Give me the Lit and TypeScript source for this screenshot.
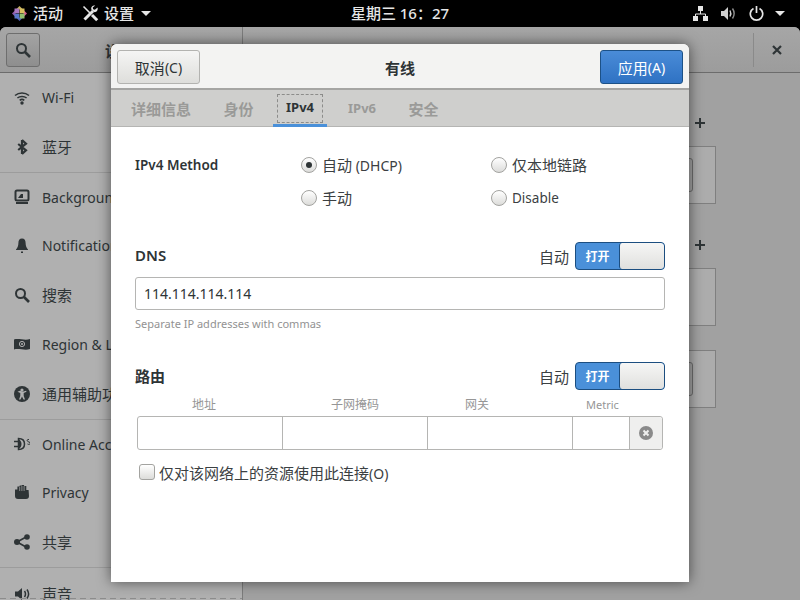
import { LitElement, html, css, svg } from "lit";
import { customElement } from "lit/decorators.js";

const ic = (body: unknown, w = 16, h = 16, vb = "0 0 16 16") =>
  html`<svg width=${w} height=${h} viewBox=${vb}>${body}</svg>`;

const icons: Record<string, unknown> = {
  wifi: ic(svg`<g fill="none" stroke="#2e3436" stroke-width="1.6"><path d="M1 6.5c4-3.4 10-3.4 14 0"/><path d="M3.4 9c2.6-2.1 6.6-2.1 9.2 0"/><path d="M5.7 11.3c1.3-1 3.3-1 4.6 0"/></g><circle cx="8" cy="14" r="1.7" fill="#2e3436"/>`),
  bt: ic(svg`<path d="M8 1v14M8 1l4 3.7L4.2 11M8 15l4-3.7L4.2 5" fill="none" stroke="#2e3436" stroke-width="2.2"/>`),
  bg: ic(svg`<rect x="1.5" y="1.5" width="13" height="10" rx="1.5" fill="none" stroke="#2e3436" stroke-width="2"/><path d="M4 9l3-4h2v4z" fill="#2e3436"/><rect x="2" y="13" width="12" height="2" fill="#2e3436"/>`),
  bell: ic(svg`<path d="M8 1.5c-2.6 0-3.6 2-3.6 4.5 0 3-1 5-2.4 6.5v.5h12v-.5c-1.4-1.5-2.4-3.5-2.4-6.5C11.600 3.500 10.600 1.500 8 1.500z" fill="#2e3436"/><rect x="7" y="14.500" width="2" height="1.500" fill="#2e3436"/>`),
  search: ic(svg`<circle cx="6.500" cy="6.500" r="4.500" fill="none" stroke="#2e3436" stroke-width="2"/><path d="M10 10l5 5" stroke="#2e3436" stroke-width="2.600"/>`),
  region: ic(svg`<path d="M0 3.500c5-1.500 11 1.500 16-.5v10c-5 2-11-1-16 .5z" fill="#2e3436"/><circle cx="8" cy="8" r="2.600" fill="none" stroke="#b0b0b0"/><circle cx="8" cy="8" r="1" fill="#b0b0b0"/>`),
  a11y: ic(svg`<circle cx="8" cy="8" r="8" fill="#2e3436"/><circle cx="8" cy="4" r="1.600" fill="#b0b0b0"/><path d="M3.500 5.800L6.300 7v3L5 13.500h1.500L8 10.500l1.500 3H11L9.700 10V7l2.800-1.200-.4-1c-2.800 1-3.400 1-6.200 0z" fill="#b0b0b0"/>`),
  online: ic(svg`<path d="M0 5.500h4M0 10.500h4" stroke="#2e3436" stroke-width="1.400"/><path d="M4.500 2.500c4.500 0 6 3 6 5.500s-1.500 5.500-6 5.500z" fill="none" stroke="#2e3436" stroke-width="1.500"/><path d="M4.500 3v10c2-1 3-3 3-5s-1-4-3-5z" fill="#2e3436"/><path d="M15 3.500c-2.500-.5-2.500 2 0 2.500s1 3.500-1.500 2" fill="none" stroke="#2e3436"/>`),
  hand: ic(svg`<path d="M1 5.500h2.400v-3H5.700V1.500h2.200v-.5h2.200v1h2.200v4h2.300l.4 6c0 1.700-1 3-3 3H4c-2 0-3-1.300-3-3z" fill="#2e3436"/><path d="M5.700 3v4M7.900 2v5M10.100 2v5" stroke="#b0b0b0" stroke-width=".7"/>`),
  share: ic(svg`<path d="M3 8l10-5.500M3 8l10 5.500" stroke="#2e3436" stroke-width="1.700"/><circle cx="3" cy="8" r="3" fill="#2e3436"/><circle cx="13" cy="3" r="2.800" fill="#2e3436"/><circle cx="13" cy="13" r="2.800" fill="#2e3436"/>`),
  sound: ic(svg`<path d="M1 5.500h3L8 2v12L4 10.500H1z" fill="#2e3436"/><path d="M10.500 5c1.200 1.800 1.200 4.200 0 6M13 3.500c2 2.800 2 6.200 0 9" fill="none" stroke="#2e3436" stroke-width="1.500"/>`),
};

const rows: [string, unknown, boolean, boolean][] = [
  ["wifi", "Wi-Fi", false, false],
  ["bt", html`<b class="c">蓝牙</b>`, true, true],
  ["bg", "Background", false, false],
  ["bell", "Notifications", false, false],
  ["search", html`<b class="c">搜索</b>`, true, false],
  ["region", "Region & Language", false, false],
  ["a11y", html`<b class="c">通用辅助功能</b>`, true, true],
  ["online", "Online Accounts", false, false],
  ["hand", "Privacy", false, false],
  ["share", html`<b class="c">共享</b>`, true, true],
  ["sound", html`<b class="c">声音</b>`, true, false],
];

@customElement("app-root")
export class AppRoot extends LitElement {
  static styles = css`
    :host { display: block; width: 800px; height: 600px; overflow: hidden; position: relative; background: #000; font-family: "Noto Sans", "Noto Sans CJK SC", sans-serif; font-size: 14px; color: #2e3436; }
    * { box-sizing: border-box; }
    .c { font-size: 15px; font-weight: inherit; }
    .topbar { height: 27px; display: grid; grid-template-columns: 1fr auto 1fr; align-items: center; color: #e6e6e6; font-weight: 500; line-height: 27px; }
    .tb-l { display: flex; align-items: center; padding-left: 12px; }
    .tb-r { display: flex; align-items: center; justify-content: flex-end; padding-right: 15px; }
    .logo { margin-right: 6px; display: flex; }
    .tools { margin-left: 19px; margin-right: 5px; display: flex; }
    .arrow { width: 0; height: 0; border-left: 5px solid transparent; border-right: 5px solid transparent; border-top: 5px solid #e6e6e6; margin-left: 7px; }
    .tb-r svg { display: block; }
    .tb-r .m { margin-left: 13px; }
    .tb-r .arrow { margin-left: 11px; }
    .clock { font-size: 15px; }
    .win { height: 573px; background: #a1a1a1; border-radius: 6px 6px 0 0; overflow: hidden; display: grid; grid-template-columns: 243px 1fr; grid-template-rows: 46px 1fr; }
    .hd-l { background: linear-gradient(#a6a6a6, #9c9c9c); border-bottom: 1px solid #6c6c6c; border-right: 1px solid #7c7c7c; padding: 6px; display: grid; grid-template-columns: 34px 1fr; align-items: center; }
    .searchbtn { width: 34px; height: 34px; border: 1px solid #6e6e6e; border-radius: 3px; background: linear-gradient(#a3a3a3, #8e8e8e); display: flex; align-items: center; justify-content: center; }
    .hd-title { font-weight: 700; font-size: 15px; padding-left: 65px; }
    .hd-r { background: linear-gradient(#a6a6a6, #9c9c9c); border-bottom: 1px solid #6c6c6c; display: flex; justify-content: flex-end; align-items: center; padding: 6px 0; }
    .hd-sep { width: 1px; height: 34px; background: #8a8a8a; }
    .close { width: 46px; display: flex; justify-content: center; }
    .side { background: #b0b0b0; border-right: 1px solid #7c7c7c; overflow: hidden; position: relative; }
    .side::after { content: ""; position: absolute; left: 0; right: 0; bottom: 1px; height: 1px; background: repeating-linear-gradient(90deg, #8c8c8c 0 6px, transparent 6px 10px); }
    .row { height: 48px; display: flex; align-items: center; padding-left: 14px; gap: 12px; white-space: nowrap; color: #2e3436; }
    .row.tall { height: 51px; }
    .row svg { flex: none; display: block; }
    .sep { height: 1px; background: #9c9c9c; }
    .main { padding: 44px 84px 0 30px; display: flex; flex-direction: column; }
    .plus-row { display: flex; justify-content: flex-end; height: 16px; margin-right: 10px; }
    .plus-row svg { display: block; }
    .frame { height: 58px; border: 1px solid #7f7f7f; background: #acacac; display: flex; justify-content: flex-end; align-items: center; padding-right: 22px; margin-top: 13px; }
    .frame .b { width: 40px; height: 34px; border: 1px solid #6e6e6e; border-radius: 3px; background: #a4a4a4; }
    .mt2 { margin-top: 24px; }
    .plus2 { margin-top: 35px; }
    .dialog { position: absolute; left: 111px; top: 44px; width: 578px; height: 538px; background: #fff; border-radius: 6px 6px 0 0; box-shadow: 0 0 14px rgba(0,0,0,.55); display: flex; flex-direction: column; }
    .d-head { height: 46px; background: #f3f3f2; border-bottom: 2px solid #a5a5a3; border-radius: 6px 6px 0 0; display: grid; grid-template-columns: 1fr auto 1fr; align-items: center; padding: 6px; }
    .btn { height: 34px; width: 83px; border-radius: 3px; border: 1px solid #b3b3b0; background: linear-gradient(#f5f5f4, #dededb); display: flex; align-items: center; justify-content: center; color: #2e3436; }
    .btn.apply { background: linear-gradient(#4a8cd8, #2f72c3); border-color: #1c5187; color: #fff; justify-self: end; }
    .d-title { font-weight: 700; font-size: 15px; color: #2e3436; }
    .tabs { height: 37px; background: #cfcfcd; border-bottom: 1px solid #b5b5b3; display: flex; padding-left: 7px; gap: 6.5px; font-weight: 700; color: #9a9a98; font-size: 15px; }
    .tab { padding: 0 13px; height: 36px; display: flex; align-items: center; position: relative; }
    .tab.on { color: #2e3436; border-bottom: 3px solid #4a90d9; margin-bottom: -1px; margin-right: 1.5px; height: 37px; }
    .lat { font-size: 13px; }
    .focus { position: absolute; left: 4px; right: 4px; top: 4px; bottom: 1px; border: 1px dashed #8c8c8a; }
    .tab span { position: relative; }
    .body { padding: 21px 24px 0; display: flex; flex-direction: column; }
    .method { display: grid; grid-template-columns: 166px 190px 1fr; grid-auto-rows: 33px; align-items: center; }
    .lbl { font-weight: 600; font-size: 13.5px; color: #2e3436; }
    .opt { display: flex; align-items: center; gap: 5px; color: #3b4042; white-space: nowrap; }
    .opt.narrow { font-size: 13.5px; }
    .radio { width: 16px; height: 16px; border-radius: 50%; border: 1px solid #a3a3a0; background: linear-gradient(#fff, #dcdcda); display: flex; align-items: center; justify-content: center; flex: none; }
    .radio.on::after { content: ""; width: 6px; height: 6px; border-radius: 50%; background: #2e3436; }
    .sw-row { height: 28px; display: flex; align-items: center; justify-content: space-between; }
    .sw-row .t { font-size: 15px; font-weight: 600; padding-bottom: 2px; }
    .sw-r { display: flex; align-items: center; gap: 6px; color: #3b4042; font-size: 15px; }
    .switch { width: 90px; height: 28px; border: 1px solid #1c4e80; border-radius: 4px; background: #4a90d9; display: flex; overflow: hidden; }
    .switch .on { width: 43px; display: flex; align-items: center; justify-content: center; color: #fff; font-weight: 700; font-size: 12px; }
    .switch .knob { flex: 1; border-left: 1px solid #1c4e80; border-radius: 3px; background: linear-gradient(#f6f6f5, #e0e0de); }
    .dns { margin-top: 28px; }
    .entry { margin-top: 7px; height: 33px; border: 1px solid #b5b5b3; border-radius: 3px; padding: 0 8px 1px; display: flex; align-items: center; color: #2e3436; }
    .hint { margin-top: 6px; height: 16px; line-height: 16px; font-size: 11px; color: #929292; }
    .route { margin-top: 30px; }
    .cols { margin-top: 8px; height: 14px; line-height: 14px; display: grid; grid-template-columns: 139px 134px 121px auto; padding-left: 57px; font-size: 12px; color: #969696; }
    .cols .m { font-size: 11px; }
    .table { margin: 4px 2px 0; height: 34px; border: 1px solid #b5b5b3; border-radius: 3px; display: grid; grid-template-columns: 145px 145px 145px 57px 1fr; }
    .table div { border-right: 1px solid #b5b5b3; }
    .table .x { border: 0; background: #efefee; display: flex; align-items: center; justify-content: center; border-radius: 0 3px 3px 0; }
    .chk { margin: 13px 0 0 4px; display: flex; align-items: center; gap: 4px; height: 18px; color: #3b4042; font-size: 15px; }
    .chk .o { font-size: 14px; }
    .box { width: 16px; height: 16px; border: 1px solid #a3a3a0; border-radius: 3px; background: linear-gradient(#fff, #dcdcda); flex: none; }
  `;

  render() {
    return html`
      <div class="topbar">
        <div class="tb-l">
          <span class="logo"><svg width="15" height="15" viewBox="0 0 15 15">
            <path d="M7.500 0L11 3.500H4z" fill="#c4b060"/><path d="M15 7.500L11.500 11V4z" fill="#d05a90"/><path d="M7.500 15L4 11.500h7z" fill="#5060b8"/><path d="M0 7.500L3.500 4v7z" fill="#8a5aa8"/>
            <rect x="2.500" y="2.500" width="4.800" height="4.800" fill="#a878c0"/><rect x="7.700" y="2.500" width="4.800" height="4.800" fill="#d8c060"/><rect x="2.500" y="7.700" width="4.800" height="4.800" fill="#5878c8"/><rect x="7.700" y="7.700" width="4.800" height="4.800" fill="#90c070"/>
          </svg></span>
          <span class="c">活动</span>
          <span class="tools"><svg width="17" height="17" viewBox="0 0 17 17"><path d="M1.500 1.500l6.500 6.500" stroke="#e6e6e6" stroke-width="1.600"/><path d="M10 10l5.200 5.200" stroke="#e6e6e6" stroke-width="3"/><path d="M2.500 14.500l8.500-8.500" stroke="#e6e6e6" stroke-width="3"/><path d="M15.500 2.500l-2.600 2.300-1.700-.6-.5-1.700L13.200.6c-2.700-.8-4.800 1.700-3.700 4.200l2.400 2.300c2.500.8 4.500-1.800 3.600-4.600z" fill="#e6e6e6"/></svg></span>
          <span class="c">设置</span>
          <span class="arrow"></span>
        </div>
        <div class="clock">星期三 16：27</div>
        <div class="tb-r">
          <svg width="15" height="15" viewBox="0 0 15 15"><rect x="5" y="0" width="5" height="5" fill="#e6e6e6"/><rect x="0" y="10" width="5" height="5" fill="#e6e6e6"/><rect x="10" y="10" width="5" height="5" fill="#e6e6e6"/><path d="M7.500 5v3M2.500 10V8h10v2" fill="none" stroke="#e6e6e6"/></svg>
          <svg class="m" width="15" height="15" viewBox="0 0 15 15"><path d="M0 5h3l4-4v13l-4-4H0z" fill="#d0d0d0"/><path d="M9 4.500c1 1.800 1 4.200 0 6" fill="none" stroke="#d0d0d0" stroke-width="1.400"/><path d="M11.500 2.500c2 3 2 7 0 10" fill="none" stroke="#8f8f8f" stroke-width="1.400"/></svg>
          <svg class="m" width="15" height="15" viewBox="0 0 15 15"><path d="M4.500 2.500a6.200 6.200 0 1 0 6 0" fill="none" stroke="#e6e6e6" stroke-width="1.700"/><path d="M7.500 0v7" stroke="#e6e6e6" stroke-width="1.700"/></svg>
          <span class="arrow"></span>
        </div>
      </div>
      <div class="win">
        <div class="hd-l">
          <div class="searchbtn">${icons.search}</div>
          <div class="hd-title">设置</div>
        </div>
        <div class="hd-r">
          <div class="hd-sep"></div>
          <div class="close"><svg width="12" height="12" viewBox="0 0 12 12"><path d="M2 2l8 8M10 2l-8 8" stroke="#2e3436" stroke-width="2.200"/></svg></div>
        </div>
        <div class="side">
          ${rows.map(([i, t, tall, sep]) => html`
            <div class="row ${tall ? "tall" : ""}">${icons[i]}<span>${t}</span></div>
            ${sep ? html`<div class="sep"></div>` : ""}
          `)}
        </div>
        <div class="main">
          <div class="plus-row"><svg width="12" height="12" viewBox="0 0 12 12"><path d="M6 1v10M1 6h10" stroke="#2e3436" stroke-width="2"/></svg></div>
          <div class="frame"><div class="b"></div></div>
          <div class="plus-row plus2"><svg width="12" height="12" viewBox="0 0 12 12"><path d="M6 1v10M1 6h10" stroke="#2e3436" stroke-width="2"/></svg></div>
          <div class="frame"></div>
          <div class="frame mt2"><div class="b"></div></div>
        </div>
      </div>
      <div class="dialog">
        <div class="d-head">
          <div class="btn"><span class="c">取消</span>(C)</div>
          <div class="d-title">有线</div>
          <div class="btn apply"><span class="c">应用</span>(A)</div>
        </div>
        <div class="tabs">
          <div class="tab"><span>详细信息</span></div>
          <div class="tab"><span>身份</span></div>
          <div class="tab on"><i class="focus"></i><span class="lat">IPv4</span></div>
          <div class="tab"><span class="lat">IPv6</span></div>
          <div class="tab"><span>安全</span></div>
        </div>
        <div class="body">
          <div class="method">
            <div class="lbl">IPv4 Method</div>
            <div class="opt"><i class="radio on"></i><span><span class="c">自动</span> (DHCP)</span></div>
            <div class="opt"><i class="radio"></i><span class="c">仅本地链路</span></div>
            <div></div>
            <div class="opt"><i class="radio"></i><span class="c">手动</span></div>
            <div class="opt narrow"><i class="radio"></i>Disable</div>
          </div>
          <div class="sw-row dns">
            <span class="t">DNS</span>
            <div class="sw-r">自动<div class="switch"><div class="on">打开</div><div class="knob"></div></div></div>
          </div>
          <div class="entry">114.114.114.114</div>
          <div class="hint">Separate IP addresses with commas</div>
          <div class="sw-row route">
            <span class="t">路由</span>
            <div class="sw-r">自动<div class="switch"><div class="on">打开</div><div class="knob"></div></div></div>
          </div>
          <div class="cols"><span>地址</span><span>子网掩码</span><span>网关</span><span class="m">Metric</span></div>
          <div class="table">
            <div></div><div></div><div></div><div></div>
            <div class="x"><svg width="14" height="14" viewBox="0 0 14 14"><circle cx="7" cy="7" r="7" fill="#8a8a8a"/><path d="M4.500 4.500l5 5M9.500 4.500l-5 5" stroke="#efefee" stroke-width="2"/></svg></div>
          </div>
          <div class="chk"><i class="box"></i><span>仅对该网络上的资源使用此连接<span class="o">(O)</span></span></div>
        </div>
      </div>
    `;
  }
}
